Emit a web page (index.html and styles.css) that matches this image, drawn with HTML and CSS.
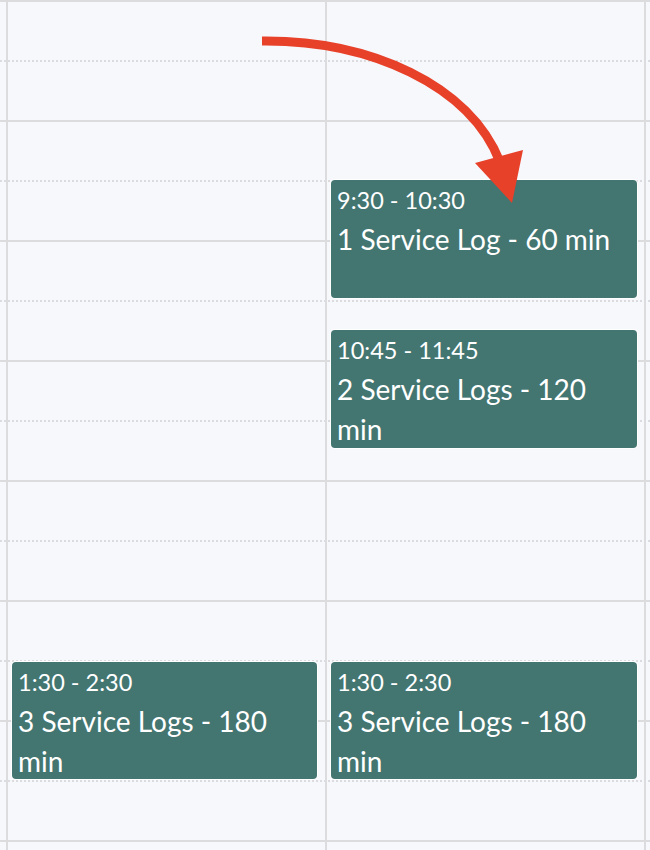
FILE: index.html
```html
<!DOCTYPE html>
<html>
<head>
<meta charset="utf-8">
<link rel="stylesheet" href="styles.css">
</head>
<body>
<div class="calendar">
  <div class="slots">
    <div class="slot hour"></div><div class="slot half"></div>
    <div class="slot hour"></div><div class="slot half"></div>
    <div class="slot hour"></div><div class="slot half"></div>
    <div class="slot hour"></div><div class="slot half"></div>
    <div class="slot hour"></div><div class="slot half"></div>
    <div class="slot hour"></div><div class="slot half"></div>
    <div class="slot hour"></div><div class="slot half"></div>
    <div class="slot hour"></div><div class="slot half"></div>
  </div>
  <div class="days">
    <div class="day">
      <div class="event" style="top:654px;height:117px;">
        <div class="time">1:30 - 2:30</div>
        <div class="title">3 Service Logs - 180 min</div>
      </div>
    </div>
    <div class="day last">
      <div class="event" style="top:172px;height:118px;">
        <div class="time">9:30 - 10:30</div>
        <div class="title">1 Service Log - 60 min</div>
      </div>
      <div class="event" style="top:322px;height:118px;">
        <div class="time">10:45 - 11:45</div>
        <div class="title">2 Service Logs - 120 min</div>
      </div>
      <div class="event" style="top:654px;height:117px;">
        <div class="time">1:30 - 2:30</div>
        <div class="title">3 Service Logs - 180 min</div>
      </div>
    </div>
  </div>
  <svg class="arrow" width="650" height="850" viewBox="0 0 650 850">
    <path d="M262 41 C370 40 470 85 500 162" fill="none" stroke="#e8412a" stroke-width="9"/>
    <polygon points="475,163 523,150 512,203" fill="#e8412a"/>
  </svg>
</div>
</body>
</html>
```

FILE: styles.css
```css
html, body {
  margin: 0;
  padding: 0;
}
body {
  background: #f7f8fc;
  font-family: Lato, "Noto Sans", sans-serif;
  width: 650px;
  height: 850px;
  overflow: hidden;
}
.calendar {
  position: relative;
  width: 650px;
  height: 850px;
  overflow: hidden;
}
.slots {
  display: flex;
  flex-direction: column;
}
.slot {
  height: 60px;
  flex: none;
}
.hour {
  border-top: 2px solid #dcdcde;
  box-sizing: border-box;
}
.half {
  background-image: linear-gradient(to right, #dcdcde 50%, transparent 50%);
  background-size: 4px 2px;
  background-repeat: repeat-x;
  background-position: 0 0;
}
.days {
  position: absolute;
  inset: 0;
  display: flex;
  padding-left: 6px;
}
.day {
  position: relative;
  width: 317px;
  flex: none;
  border-left: 2px solid #dcdcde;
  height: 850px;
}
.day.last {
  border-right: 2px solid #dcdcde;
}
.event {
  position: absolute;
  left: 4px;
  right: 8px;
  box-sizing: border-box;
  background: #437571;
  border-radius: 4px;
  box-shadow: 0 0 0 1px #ffffff;
  color: #ffffff;
  padding: 2px 6px 0 6px;
  margin-top: 8px;
}
.day.last .event {
  right: 7px;
}
.time {
  font-size: 23.5px;
  line-height: 37px;
}
.title {
  font-size: 28px;
  line-height: 40px;
}
.arrow {
  position: absolute;
  left: 0;
  top: 0;
  pointer-events: none;
}
```
